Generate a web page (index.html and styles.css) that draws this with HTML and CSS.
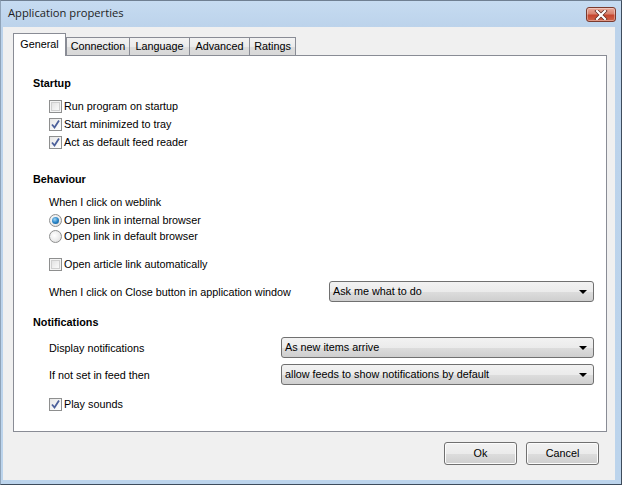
FILE: index.html
```html
<!DOCTYPE html>
<html>
<head>
<meta charset="utf-8">
<link rel="stylesheet" href="styles.css">
</head>
<body>
<div class="window">
  <div class="titlebar">
    <span class="title">Application properties</span>
    <div class="close">
      <svg width="14" height="10" viewBox="0 0 14 10">
        <path d="M3 1 L11 9 M11 1 L3 9" stroke="#5a2a22" stroke-width="3.6" stroke-linecap="square" fill="none"/>
        <path d="M3 1 L11 9 M11 1 L3 9" stroke="#ffffff" stroke-width="2.2" stroke-linecap="square" fill="none"/>
      </svg>
    </div>
  </div>
  <div class="client">
    <div class="tabs">
      <div class="tab selected t-general">General</div>
      <div class="tab t-conn">Connection</div>
      <div class="tab t-lang">Language</div>
      <div class="tab t-adv">Advanced</div>
      <div class="tab t-rat">Ratings</div>
    </div>
    <div class="panel">
      <div class="heading h-startup">Startup</div>
      <div class="row check r-first"><span class="cb"></span>Run program on startup</div>
      <div class="row check"><span class="cb checked"><svg width="11" height="11" viewBox="0 0 11 11"><path d="M2 5.5 L4.5 8.5 L9 1.5" stroke="#4b5f9a" stroke-width="1.8" fill="none"/></svg></span>Start minimized to tray</div>
      <div class="row check"><span class="cb checked"><svg width="11" height="11" viewBox="0 0 11 11"><path d="M2 5.5 L4.5 8.5 L9 1.5" stroke="#4b5f9a" stroke-width="1.8" fill="none"/></svg></span>Act as default feed reader</div>

      <div class="heading h-behaviour">Behaviour</div>
      <div class="row label r-weblink">When I click on weblink</div>
      <div class="row radio-row r-radio1"><span class="rb on"></span>Open link in internal browser</div>
      <div class="row radio-row r-radio2"><span class="rb"></span>Open link in default browser</div>
      <div class="row check r-article"><span class="cb"></span>Open article link automatically</div>
      <div class="row combo-row r-close">
        <span>When I click on Close button in application window</span>
        <div class="combo c-close"><span>Ask me what to do</span><span class="arrow"></span></div>
      </div>

      <div class="heading h-notif">Notifications</div>
      <div class="row combo-row r-display">
        <span>Display notifications</span>
        <div class="combo c-wide"><span>As new items arrive</span><span class="arrow"></span></div>
      </div>
      <div class="row combo-row r-ifnot">
        <span>If not set in feed then</span>
        <div class="combo c-wide"><span>allow feeds to show notifications by default</span><span class="arrow"></span></div>
      </div>
      <div class="row check r-play"><span class="cb checked"><svg width="11" height="11" viewBox="0 0 11 11"><path d="M2 5.5 L4.5 8.5 L9 1.5" stroke="#4b5f9a" stroke-width="1.8" fill="none"/></svg></span>Play sounds</div>
    </div>
    <div class="buttons">
      <div class="btn">Ok</div>
      <div class="btn">Cancel</div>
    </div>
  </div>
</div>
</body>
</html>
```
FILE: styles.css
```css
html, body {
  margin: 0;
  padding: 0;
  background: #ffffff;
}
body {
  font-family: "Liberation Sans", Arial, sans-serif;
  font-size: 10.8px;
  color: #000;
}
.window {
  width: 622px;
  height: 485px;
  box-sizing: border-box;
  border-top: 1px solid #6f7f92;
  border-right: 1px solid #3e4c5c;
  border-bottom: 1px solid #3e4c5c;
  border-left: 1px solid #8fa3b8;
  background: linear-gradient(to bottom, #c6dbf1 0px, #bcd3eb 26px, #bcd4ec 100%);
  padding: 0 6px 4px 2px;
  display: flex;
  flex-direction: column;
}
.titlebar {
  height: 26px;
  display: flex;
  align-items: flex-start;
  margin-left: -2px;
  margin-right: -6px;
}
.title {
  font-family: "Open Sans", "Liberation Sans", sans-serif;
  font-size: 11.2px;
  color: #1e1e1e;
  padding-left: 7px;
  padding-top: 4px;
  line-height: 16px;
}
.close {
  margin-left: auto;
  margin-right: 5px;
  margin-top: 6px;
  width: 28px;
  height: 13px;
  border: 1px solid #7a3a2e;
  border-radius: 3px;
  background: linear-gradient(to bottom, #e9a899 0%, #d8836f 45%, #c5452e 55%, #d0654a 100%);
  display: flex;
  align-items: center;
  justify-content: center;
  box-shadow: inset 0 0 0 1px rgba(255,255,255,0.35);
}
.client {
  flex: 1;
  background: #f0f0f0;
  padding: 6px 8px 0 10px;
  display: flex;
  flex-direction: column;
}
.tabs {
  height: 22px;
  display: flex;
  align-items: flex-end;
  position: relative;
  z-index: 2;
}
.tab {
  box-sizing: border-box;
  height: 18px;
  border: 1px solid #898c95;
  border-bottom: none;
  background: linear-gradient(to bottom, #f3f3f3 0%, #ebebeb 50%, #dddddd 51%, #d8d8d8 100%);
  text-align: center;
  line-height: 17px;
  margin-left: -1px;
}
.tab.selected {
  height: 23px;
  margin-bottom: -1px;
  margin-left: 0;
  background: #ffffff;
  line-height: 20px;
  border-color: #898c95;
  position: relative;
  z-index: 3;
}
.t-general { width: 53px; }
.t-conn { width: 64px; margin-left: 0; }
.t-lang { width: 61px; }
.t-adv { width: 61px; }
.t-rat { width: 47px; }
.panel {
  height: 377px;
  box-sizing: border-box;
  border: 1px solid #898c95;
  background: #ffffff;
  display: flex;
  flex-direction: column;
}
.heading {
  font-weight: bold;
  height: 18px;
  line-height: 18px;
  padding-left: 19px;
}
.h-startup { margin-top: 18px; }
.h-behaviour { margin-top: 19px; }
.h-notif { margin-top: 11px; }
.row {
  height: 18px;
  line-height: 18px;
  padding-left: 35px;
  display: flex;
  align-items: center;
}
.r-first { margin-top: 5px; }
.r-weblink { margin-top: 5px; }
.radio-row { height: 17px; line-height: 17px; }
.r-radio1 { margin-top: 1px; }
.r-radio2 { margin-top: -1px; }
.r-article { margin-top: 10px; }
.r-close { margin-top: 8px; }
.r-display { margin-top: 6px; }
.r-ifnot { margin-top: 6px; }
.r-play { margin-top: 10px; }
.combo-row {
  height: 21px;
  padding-right: 12px;
}
.cb {
  box-sizing: border-box;
  width: 13px;
  height: 13px;
  border: 1px solid #8e8f8f;
  background: linear-gradient(135deg, #dcdcdc 0%, #f2f2f2 60%, #ffffff 100%);
  box-shadow: inset 0 0 0 1px #f4f4f4, inset 0 0 0 2px #cfcfcf;
  margin-right: 2px;
  display: flex;
  align-items: center;
  justify-content: center;
}
.cb.checked {
  background: linear-gradient(135deg, #e6e6e6 0%, #f6f6f6 60%, #ffffff 100%);
  box-shadow: none;
}
.rb {
  box-sizing: border-box;
  width: 13px;
  height: 13px;
  border-radius: 50%;
  border: 1px solid #8e8f8f;
  background: radial-gradient(circle at 40% 40%, #ffffff 0%, #eeeeee 50%, #d6d6d6 100%);
  margin-right: 2px;
  position: relative;
}
.rb.on::after {
  content: "";
  position: absolute;
  left: 2px;
  top: 2px;
  width: 7px;
  height: 7px;
  border-radius: 50%;
  background: radial-gradient(circle at 40% 35%, #9fd4f4 0%, #2a86c8 50%, #104f83 100%);
}
.combo {
  margin-left: auto;
  box-sizing: border-box;
  height: 21px;
  border: 1px solid #707070;
  border-radius: 3px;
  background: linear-gradient(to bottom, #f2f2f2 0%, #ebebeb 50%, #dddddd 51%, #cfcfcf 100%);
  display: flex;
  align-items: center;
  padding-left: 3px;
  padding-right: 6px;
  line-height: 19px;
}
.c-close { width: 265px; }
.c-wide { width: 313px; }
.arrow {
  margin-left: auto;
  width: 0;
  height: 0;
  border-left: 4px solid transparent;
  border-right: 4px solid transparent;
  border-top: 4px solid #000;
  margin-top: 1px;
}
.buttons {
  display: flex;
  justify-content: flex-end;
  gap: 9px;
  margin-top: 10px;
  padding-right: 8px;
}
.btn {
  box-sizing: border-box;
  width: 73px;
  height: 23px;
  border: 1px solid #707070;
  border-radius: 3px;
  background: linear-gradient(to bottom, #f2f2f2 0%, #ebebeb 50%, #dddddd 51%, #cfcfcf 100%);
  box-shadow: inset 0 0 0 1px #fcfcfc;
  text-align: center;
  line-height: 21px;
}
```
